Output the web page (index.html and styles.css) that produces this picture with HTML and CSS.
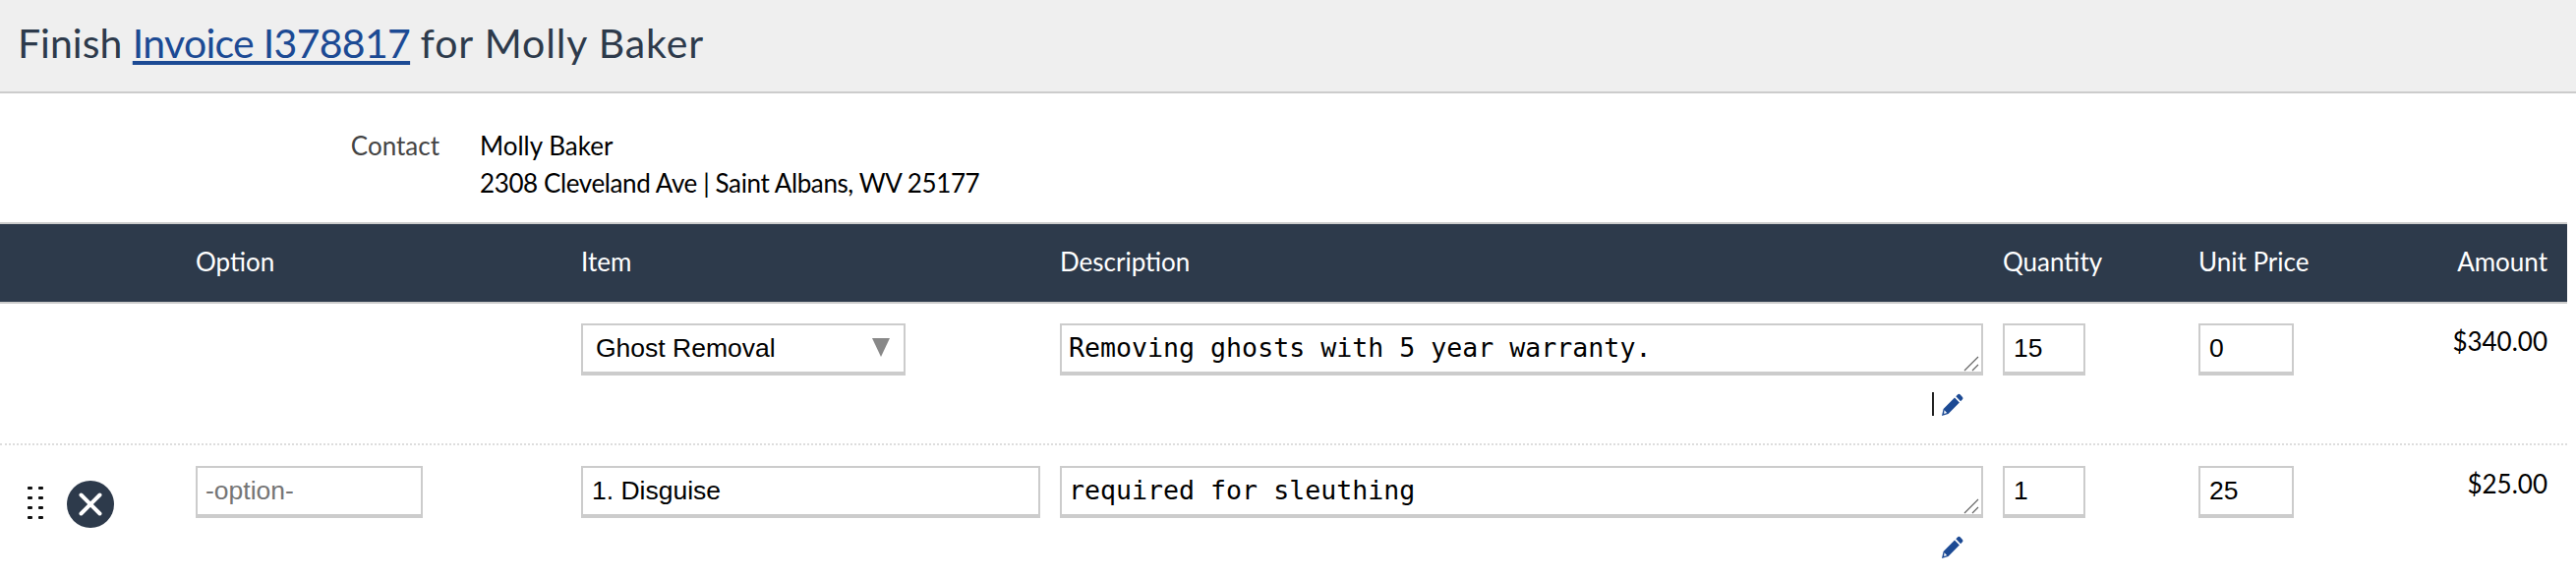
FILE: index.html
```html
<!DOCTYPE html>
<html lang="en">
<head>
    <meta charset="UTF-8">
    <title>Finish Invoice I378817</title>
    <link rel="stylesheet" href="styles.css">
</head>
<body>
    <div class="page-header">
        <h1 class="page-title">Finish <a href="#">Invoice I378817</a> <span class="title-rest">for Molly Baker</span></h1>
    </div>

    <div class="contact-row">
        <div class="contact-label">Contact</div>
        <div class="contact-value">
            <div>Molly Baker</div>
            <div class="contact-address">2308 Cleveland Ave | Saint Albans, WV 25177</div>
        </div>
    </div>

    <div class="invoice-lines">
        <div class="line-grid table-head">
            <div></div>
            <div>Option</div>
            <div>Item</div>
            <div>Description</div>
            <div>Quantity</div>
            <div>Unit Price</div>
            <div class="amount-col">Amount</div>
        </div>

        <div class="line-grid line-row">
            <div></div>
            <div></div>
            <div>
                <div class="select-box">
                    <span>Ghost Removal</span>
                    <span class="select-arrow"></span>
                </div>
            </div>
            <div>
                <div class="text-box mono-box">Removing ghosts with 5 year warranty.<svg class="resize-grip" viewBox="0 0 16 16"><path d="M1 15 15 1M9 15l6-6" /></svg></div>
                <div class="edit-row">
                    <span class="text-cursor"></span>
                    <svg class="pencil" viewBox="0 0 22 23"><path d="M16 1.5a2 2 0 0 1 2.8 0l2 2.2a2 2 0 0 1 0 2.8l-1.7 1.7-4.8-5ZM13 4.5l4.9 5L6.6 21 0 23l1.6-7Z" /><path class="pencil-tip" d="M2.5 17.2 5.2 20l-3 .9Z" /></svg>
                </div>
            </div>
            <div><div class="text-box qty-box">15</div></div>
            <div><div class="text-box price-box">0</div></div>
            <div class="amount-col amount-value">$340.00</div>
        </div>

        <div class="line-grid line-row second-row">
            <div class="row-tools">
                <span class="drag-handle"><i></i><i></i><i></i><i></i><i></i><i></i><i></i><i></i></span>
                <svg class="remove-btn" viewBox="0 0 48 48"><circle cx="24" cy="24" r="24" /><path d="M14.5 14.5l19 19M33.5 14.5l-19 19" /></svg>
            </div>
            <div><div class="text-box option-box">-option-</div></div>
            <div><div class="text-box item-box">1. Disguise</div></div>
            <div>
                <div class="text-box mono-box">required for sleuthing<svg class="resize-grip" viewBox="0 0 16 16"><path d="M1 15 15 1M9 15l6-6" /></svg></div>
                <div class="edit-row">
                    <svg class="pencil" viewBox="0 0 22 23"><path d="M16 1.5a2 2 0 0 1 2.8 0l2 2.2a2 2 0 0 1 0 2.8l-1.7 1.7-4.8-5ZM13 4.5l4.9 5L6.6 21 0 23l1.6-7Z" /><path class="pencil-tip" d="M2.5 17.2 5.2 20l-3 .9Z" /></svg>
                </div>
            </div>
            <div><div class="text-box qty-box">1</div></div>
            <div><div class="text-box price-box">25</div></div>
            <div class="amount-col amount-value">$25.00</div>
        </div>
    </div>
</body>
</html>
```

FILE: styles.css
```css
* {
    margin: 0;
    padding: 0;
    box-sizing: border-box;
}

body {
    font-family: 'Lato', 'Liberation Sans', sans-serif;
    background: white;
    color: #000;
    overflow: hidden;
}

.page-header {
    height: 95px;
    background: #efefef;
    border-bottom: 2px solid #ccc;
    padding: 18px 0 0 18px;
}

.page-title {
    font-size: 41px;
    line-height: 52px;
    font-weight: 400;
    color: #2d3a4b;
}

.page-title a {
    color: #1c4a94;
    letter-spacing: -0.7px;
}

.title-rest {
    letter-spacing: 0.9px;
}

.contact-row {
    height: 131px;
    display: flex;
    padding-top: 34px;
    font-size: 26px;
    line-height: 38px;
}

.contact-label {
    width: 447px;
    text-align: right;
    color: #444;
}

.contact-value {
    margin-left: 41px;
}

.contact-address {
    letter-spacing: -0.39px;
}

.invoice-lines {
    width: 2611px;
}

.line-grid {
    display: grid;
    grid-template-columns: 199px 392px 487px 959px 199px 198px 1fr;
    padding-right: 20px;
}

.table-head {
    height: 83px;
    background: #2d3a4b;
    border-top: 2px solid #ccc;
    border-bottom: 2px solid #ccc;
    color: white;
    font-size: 26px;
    line-height: 76px;
}

.amount-col {
    text-align: right;
}

.line-row {
    height: 144px;
    padding-top: 20px;
    border-bottom: 2px dotted #ddd;
}

.second-row {
    border-bottom: none;
    padding-top: 21px;
}

.text-box,
.select-box {
    height: 53px;
    border: 2px solid #ccc;
    border-bottom-width: 4px;
    background: white;
    font-family: 'Liberation Sans', Arial, sans-serif;
    font-size: 26.5px;
    line-height: 46px;
    position: relative;
}

.select-box {
    width: 330px;
    display: flex;
    justify-content: space-between;
    padding: 0 14px 0 13px;
}

.select-arrow {
    width: 0;
    height: 0;
    margin-top: 13px;
    border-left: 9px solid transparent;
    border-right: 9px solid transparent;
    border-top: 19px solid #888;
}

.mono-box {
    width: 939px;
    font-family: 'DejaVu Sans Mono', monospace;
    font-size: 26.6px;
    padding-left: 7px;
}

.resize-grip {
    position: absolute;
    right: 2px;
    bottom: 0;
    width: 16px;
    height: 16px;
    fill: none;
    stroke: #666;
    stroke-width: 1.2;
}

.qty-box {
    width: 84px;
    padding-left: 9px;
}

.price-box {
    width: 97px;
    padding-left: 9px;
}

.option-box {
    width: 231px;
    padding-left: 8px;
    color: #757575;
}

.item-box {
    width: 467px;
    padding-left: 9px;
}

.edit-row {
    width: 919px;
    height: 24px;
    margin-top: 17px;
    display: flex;
    justify-content: flex-end;
    align-items: center;
    gap: 8px;
}

.text-cursor {
    width: 2px;
    height: 24px;
    background: #222;
}

.pencil {
    width: 22px;
    height: 23px;
    fill: #1c4a94;
}

.pencil-tip {
    fill: white;
}

.amount-value {
    font-size: 26px;
    line-height: 36px;
}

.row-tools {
    display: flex;
    align-items: flex-start;
    padding: 15px 0 0 28px;
    gap: 24px;
}

.drag-handle {
    width: 16px;
    margin-top: 6px;
    display: grid;
    grid-template-columns: 5px 5px;
    column-gap: 6px;
    row-gap: 7px;
}

.drag-handle i {
    height: 3px;
    background: #111;
    border-radius: 1px;
}

.remove-btn {
    width: 48px;
    height: 48px;
    fill: #2d3a4b;
}

.remove-btn path {
    stroke: white;
    stroke-width: 4;
    stroke-linecap: round;
    fill: none;
}
```
